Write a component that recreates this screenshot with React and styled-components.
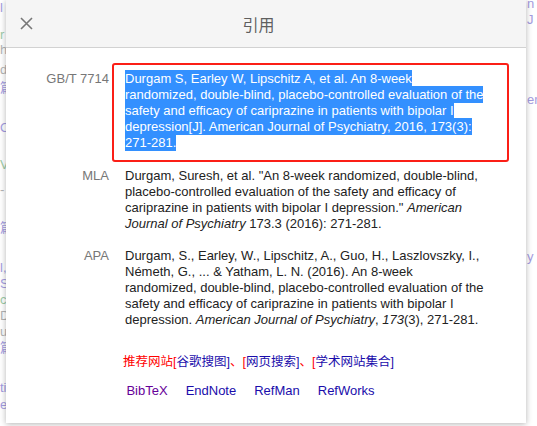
import React from 'react';
import styled, { createGlobalStyle } from 'styled-components';

const leftCrumbs = [
  { y: 0, text: 'l', tone: 'purple' },
  { y: 27, text: 'r', tone: 'green' },
  { y: 42, text: 'h', tone: 'gray' },
  { y: 62, text: 'd:', tone: 'gray' },
  { y: 80, text: '篇', tone: 'purple' },
  { y: 120, text: 'O', tone: 'purple' },
  { y: 157, text: 'V', tone: 'green' },
  { y: 182, text: '-', tone: 'gray' },
  { y: 220, text: '篇', tone: 'purple' },
  { y: 260, text: 'l,', tone: 'purple' },
  { y: 276, text: 'S', tone: 'purple' },
  { y: 292, text: 'c', tone: 'green' },
  { y: 308, text: 'D', tone: 'gray' },
  { y: 324, text: 'u', tone: 'gray' },
  { y: 340, text: '篇', tone: 'purple' },
  { y: 380, text: 'ti', tone: 'purple' },
  { y: 397, text: 'e', tone: 'purple' },
];

const rightCrumbs = [
  { y: -4, text: 'n', tone: 'purple' },
  { y: 12, text: 'J', tone: 'purple' },
  { y: 92, text: 'en', tone: 'purple' },
  { y: 249, text: 'y', tone: 'purple' },
];

const tones = { purple: '#a49ce0', green: '#9ecba6', gray: '#b3b3b3' };

function withGaps(list) {
  let bottom = 0;
  return list.map((c) => {
    const gap = c.y - bottom;
    bottom = c.y + 16;
    return { ...c, gap };
  });
}

function App() {
  return (
    <>
      <GlobalStyle />
      <Page>
        <Backdrop>
          {withGaps(leftCrumbs).map((c, i) => (
            <Crumb key={i} $gap={c.gap} $tone={tones[c.tone]}>{c.text}</Crumb>
          ))}
        </Backdrop>
        <Backdrop $right>
          {withGaps(rightCrumbs).map((c, i) => (
            <Crumb key={i} $gap={c.gap} $tone={tones[c.tone]}>{c.text}</Crumb>
          ))}
        </Backdrop>

        <Dialog>
          <Header>
            <CloseButton aria-label="关闭">
              <svg width="13" height="13" viewBox="0 0 13 13">
                <path d="M1 1 L12 12 M12 1 L1 12" stroke="#777" strokeWidth="1.6" fill="none" />
              </svg>
            </CloseButton>
            <Title>引用</Title>
            <span />
          </Header>

          <Body>
            <CiteRow $space={17}>
              <Label>GB/T 7714</Label>
              <CiteText $boxed>
                <Selected>
                  Durgam S, Earley W, Lipschitz A, et al. An 8-week randomized, double-blind,
                  placebo-controlled evaluation of the safety and efficacy of cariprazine in
                  patients with bipolar I depression[J]. American Journal of Psychiatry, 2016,
                  173(3): 271-281.
                </Selected>
              </CiteText>
            </CiteRow>

            <CiteRow $space={16}>
              <Label>MLA</Label>
              <CiteText>
                Durgam, Suresh, et al. "An 8-week randomized, double-blind, placebo-controlled
                evaluation of the safety and efficacy of cariprazine in patients with bipolar I
                depression." <i>American Journal of Psychiatry</i> 173.3 (2016): 271-281.
              </CiteText>
            </CiteRow>

            <CiteRow $space={0}>
              <Label>APA</Label>
              <CiteText>
                Durgam, S., Earley, W., Lipschitz, A., Guo, H., Laszlovszky, I., Németh, G., ...
                &amp; Yatham, L. N. (2016). An 8-week randomized, double-blind, placebo-controlled
                evaluation of the safety and efficacy of cariprazine in patients with bipolar I
                depression. <i>American Journal of Psychiatry</i>, <i>173</i>(3), 271-281.
              </CiteText>
            </CiteRow>

            <Recommend>
              <Red>推荐网站[</Red>
              <Link href="#">谷歌搜图]</Link>
              <Red>、[</Red>
              <Link href="#">网页搜索]</Link>
              <Red>、[</Red>
              <Link href="#">学术网站集合]</Link>
            </Recommend>

            <Exports>
              <Link href="#" $visited>BibTeX</Link>
              <Link href="#">EndNote</Link>
              <Link href="#">RefMan</Link>
              <Link href="#">RefWorks</Link>
            </Exports>
          </Body>
        </Dialog>
      </Page>
    </>
  );
}

export default App;

const GlobalStyle = createGlobalStyle`
  html, body {
    margin: 0;
    padding: 0;
    background: #fff;
  }
  body {
    font-family: "Liberation Sans", Arial, "Noto Sans CJK SC", sans-serif;
  }
`;

const Page = styled.div`
  position: relative;
  width: 537px;
  height: 426px;
  overflow: hidden;
  display: flex;
  justify-content: space-between;
`;

const Backdrop = styled.div`
  width: ${(p) => (p.$right ? '10px' : '30px')};
  display: flex;
  flex-direction: column;
  font-size: 13px;
  line-height: 16px;
  white-space: nowrap;
`;

const Crumb = styled.div`
  margin-top: ${(p) => p.$gap}px;
  height: 16px;
  color: ${(p) => p.$tone};
`;

const Dialog = styled.div`
  position: absolute;
  left: 6px;
  top: 0;
  width: 520px;
  height: 423px;
  background: #fff;
  box-shadow: 0 1px 6px rgba(0, 0, 0, 0.3);
  display: flex;
  flex-direction: column;
`;

const Header = styled.div`
  display: grid;
  grid-template-columns: 41px 1fr 56px;
  align-items: center;
  height: 47px;
  background: #f5f5f5;
  border-bottom: 1px solid #d2d2d2;
`;

const CloseButton = styled.button`
  display: flex;
  align-items: center;
  justify-content: center;
  padding: 0;
  border: 0;
  background: none;
  height: 47px;
  cursor: pointer;
`;

const Title = styled.div`
  text-align: center;
  font-family: "Noto Sans CJK SC", sans-serif;
  font-size: 16px;
  line-height: 20px;
  color: #5f5f5f;
`;

const Body = styled.div`
  padding: 23px 0 0 0;
  display: flex;
  flex-direction: column;
`;

const CiteRow = styled.div`
  display: grid;
  grid-template-columns: 103px 361px;
  column-gap: 16px;
  margin-bottom: ${(p) => p.$space}px;
  font-size: 13px;
  line-height: 16px;
`;

const Label = styled.div`
  text-align: right;
  color: #777;
`;

const CiteText = styled.div`
  position: relative;
  color: #222;

  ${(p) =>
    p.$boxed &&
    `
    &::after {
      content: '';
      position: absolute;
      top: -8px;
      bottom: -11px;
      left: -13px;
      right: -23px;
      border: 2.5px solid #fb1f17;
      border-radius: 3px;
      pointer-events: none;
    }
  `}
`;

const Selected = styled.span`
  background: #3390ff;
  color: #fff;
  padding: 1px 0;
`;

const Recommend = styled.div`
  margin-top: 26px;
  padding-right: 15px;
  text-align: center;
  font-size: 12.5px;
  line-height: 16px;
`;

const Red = styled.span`
  color: #f00;
`;

const Link = styled.a`
  color: ${(p) => (p.$visited ? '#660099' : '#1a0dab')};
  text-decoration: none;
`;

const Exports = styled.div`
  margin-top: 13px;
  padding-right: 31px;
  display: flex;
  justify-content: center;
  gap: 18px;
  font-size: 13px;
  line-height: 16px;
`;
